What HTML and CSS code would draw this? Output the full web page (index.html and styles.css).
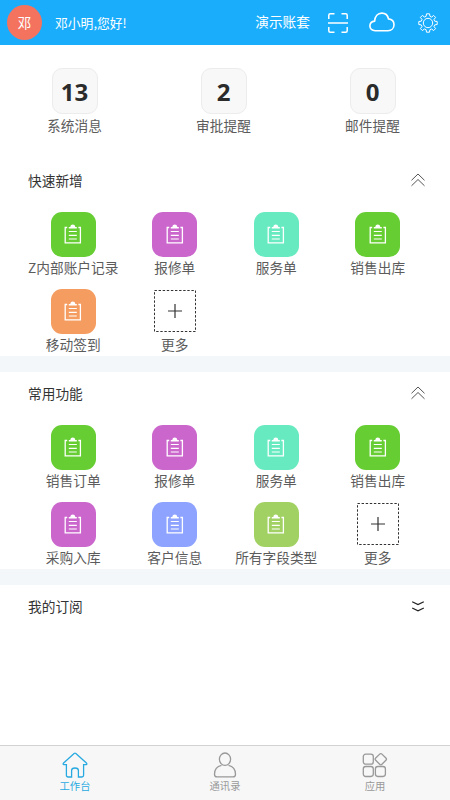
FILE: index.html
```html
<!DOCTYPE html>
<html lang="zh-CN">
<head>
<meta charset="utf-8">
<title>工作台</title>
<link rel="stylesheet" href="styles.css">
</head>
<body>
<svg class="defs" aria-hidden="true">
  <symbol id="clip" viewBox="0 0 18 20">
    <path d="M3.2 3.5H1.2V18.8H16.4V3.5H14.4" fill="none" stroke="currentColor" stroke-width="1.3"/>
    <path d="M4.8 4.5V3H6.3C6.6 1.4 7.5.6 8.8.6S11 1.4 11.3 3H12.8V4.5Z" fill="currentColor"/>
    <path d="M4.8 7.5H12.8M4.8 11.3H12.8M4.8 15H12.8" stroke="currentColor" stroke-width="1.2"/>
  </symbol>
  <symbol id="plus" viewBox="0 0 14 14">
    <path d="M7 0V14M0 7H14" stroke="currentColor" stroke-width="1.2"/>
  </symbol>
  <symbol id="up" viewBox="0 0 14 14">
    <path d="M.5 7.3L7 1L13.5 7.3M.5 12.8L7 6.5L13.5 12.8" fill="none" stroke="currentColor" stroke-width="1"/>
  </symbol>
  <symbol id="down" viewBox="0 0 14 14">
    <path d="M1.2 2.8L7 5.6L12.8 2.8M1.2 9L7 11.8L12.8 9" fill="none" stroke="currentColor" stroke-width="1.2"/>
  </symbol>
</svg>

<header class="topbar">
  <span class="avatar">邓</span>
  <span class="greeting">邓小明,您好!</span>
  <span class="account">演示账套</span>
  <svg class="scan" viewBox="0 0 20 20"><path d="M.8 6V2.3Q.8.8 2.3.8H6.5M13.5.8H17.7Q19.2.8 19.2 2.3V6M.8 14V17.7Q.8 19.2 2.3 19.2H6.5M13.5 19.2H17.7Q19.2 19.2 19.2 17.7V14M0 10H20"/></svg>
  <svg class="cloud" viewBox="0 0 26 20"><path d="M6.2 18.7C3 18.7.9 16.8.9 14.1C.9 11.3 2.8 9.4 5.6 9.1C6 4.4 8.8 1.1 12.7 1.1C16.2 1.1 18.8 3.2 19.5 6.9C22.8 7.3 25 9.6 25 12.7C25 16.2 22.4 18.7 19 18.7Z"/></svg>
  <svg class="gear" viewBox="0 0 20 20"><path d="M8.5.8H11.5L12 3.4L13.7 4.1L15.6 2.4L17.6 4.4L16 6.5L16.7 8.2L19.2 8.5V11.5L16.7 11.9L16 13.6L17.6 15.6L15.6 17.6L13.6 16L11.9 16.7L11.5 19.2H8.5L8.1 16.7L6.4 16L4.4 17.6L2.4 15.6L4 13.6L3.3 11.9L.8 11.5V8.5L3.3 8.2L4 6.5L2.4 4.4L4.4 2.4L6.4 4L8.1 3.4Z"/><circle cx="10" cy="10" r="4.7"/></svg>
</header>

<main>
  <section class="stats">
    <div class="stat"><b class="count">13</b><span class="label">系统消息</span></div>
    <div class="stat"><b class="count">2</b><span class="label">审批提醒</span></div>
    <div class="stat"><b class="count">0</b><span class="label">邮件提醒</span></div>
  </section>

  <section class="panel">
    <div class="panel-head"><h2>快速新增</h2><svg class="chevron"><use href="#up"/></svg></div>
    <div class="apps">
      <div class="app"><span class="tile green"><svg><use href="#clip"/></svg></span><span class="label">Z内部账户记录</span></div>
      <div class="app"><span class="tile purple"><svg><use href="#clip"/></svg></span><span class="label">报修单</span></div>
      <div class="app"><span class="tile mint"><svg><use href="#clip"/></svg></span><span class="label">服务单</span></div>
      <div class="app"><span class="tile green"><svg><use href="#clip"/></svg></span><span class="label">销售出库</span></div>
      <div class="app"><span class="tile orange"><svg><use href="#clip"/></svg></span><span class="label">移动签到</span></div>
      <div class="app"><span class="tile more"><svg class="frame" viewBox="0 0 42 42"><rect x=".5" y=".5" width="41" height="41"/></svg><svg class="plus"><use href="#plus"/></svg></span><span class="label">更多</span></div>
    </div>
  </section>

  <section class="panel">
    <div class="panel-head"><h2>常用功能</h2><svg class="chevron"><use href="#up"/></svg></div>
    <div class="apps">
      <div class="app"><span class="tile green"><svg><use href="#clip"/></svg></span><span class="label">销售订单</span></div>
      <div class="app"><span class="tile purple"><svg><use href="#clip"/></svg></span><span class="label">报修单</span></div>
      <div class="app"><span class="tile mint"><svg><use href="#clip"/></svg></span><span class="label">服务单</span></div>
      <div class="app"><span class="tile green"><svg><use href="#clip"/></svg></span><span class="label">销售出库</span></div>
      <div class="app"><span class="tile purple"><svg><use href="#clip"/></svg></span><span class="label">采购入库</span></div>
      <div class="app"><span class="tile blue"><svg><use href="#clip"/></svg></span><span class="label">客户信息</span></div>
      <div class="app"><span class="tile lime"><svg><use href="#clip"/></svg></span><span class="label">所有字段类型</span></div>
      <div class="app"><span class="tile more"><svg class="frame" viewBox="0 0 42 42"><rect x=".5" y=".5" width="41" height="41"/></svg><svg class="plus"><use href="#plus"/></svg></span><span class="label">更多</span></div>
    </div>
  </section>

  <section class="panel last">
    <div class="panel-head"><h2>我的订阅</h2><svg class="chevron dark"><use href="#down"/></svg></div>
  </section>
</main>

<nav class="tabs">
  <a class="tab active"><svg viewBox="0 0 26 26"><path d="M12.1 1.5Q13 .8 13.9 1.5L24.4 11Q25.5 12.3 24 12.7H21.6V23.2Q21.6 25 19.8 25H16.4V18.5Q16.4 16 13 16T9.6 18.5V25H6.2Q4.4 25 4.4 23.2V12.7H2Q.5 12.3 1.6 11Z"/></svg><span>工作台</span></a>
  <a class="tab"><svg viewBox="0 0 26 26"><ellipse cx="13" cy="7.2" rx="5.6" ry="6.2"/><path d="M9.5 13.3C5 14.3 2.5 18 2.5 22.2Q2.5 24.9 5 24.9H21Q23.5 24.9 23.5 22.2C23.5 18 21 14.3 16.5 13.3"/></svg><span>通讯录</span></a>
  <a class="tab"><svg viewBox="0 0 26 26"><rect x="1.3" y="2.2" width="10" height="10" rx="2.4"/><rect x="1.3" y="14.5" width="10" height="10" rx="2.4"/><rect x="13.4" y="14.5" width="10" height="10" rx="2.4"/><rect x="14.4" y="2.8" width="8.8" height="8.8" rx="1.6" transform="rotate(45 18.8 7.2)"/></svg><span>应用</span></a>
</nav>
</body>
</html>
```
FILE: styles.css
```css
* { box-sizing: border-box; }
body {
  margin: 0;
  height: 800px;
  display: flex;
  flex-direction: column;
  background: #fff;
  color: #5c5c5c;
  font-family: "Noto Sans CJK SC", "Noto Sans", sans-serif;
  overflow: hidden;
}
svg { display: block; flex: none; }
.defs { position: absolute; width: 0; height: 0; }

.topbar {
  height: 45px;
  flex: none;
  display: flex;
  align-items: center;
  padding: 0 12px 0 7px;
  background: #1aadfc;
  color: #fff;
}
.topbar svg { fill: none; stroke: #fff; }
.avatar {
  width: 35px;
  height: 35px;
  border-radius: 50%;
  background: #f4735f;
  font-size: 13.5px;
  line-height: 34px;
  text-align: center;
}
.greeting { margin-left: 13px; padding-bottom: 1px; font-size: 12.8px; }
.account { margin-left: auto; padding-bottom: 3px; font-size: 13.7px; }
.scan { width: 20px; height: 20px; margin-left: 18px; stroke-width: 1.5; }
.cloud { width: 26px; height: 20px; margin: 0 0 2px 21px; stroke-width: 1.6; }
.gear { width: 20px; height: 20px; margin-left: 23px; stroke-width: 1; }

main { flex: 1; min-height: 0; }
.label { font-size: 13.7px; line-height: 20px; white-space: nowrap; }

.stats {
  height: 113.5px;
  display: grid;
  grid-template-columns: repeat(3, 149px);
  padding-top: 23px;
}
.stat { display: flex; flex-direction: column; align-items: center; gap: 1px; }
.count {
  width: 46px;
  height: 46px;
  border: 1px solid #ececec;
  border-radius: 10px;
  background: #f8f8f8;
  color: #2b2b2b;
  font: bold 24px/45px "Open Sans", "Noto Sans", sans-serif;
  text-align: center;
}

.panel { height: 213px; border-bottom: 16px solid #f3f7f9; }
.panel.last { border: 0; }
.panel-head {
  height: 42px;
  display: flex;
  align-items: center;
  justify-content: space-between;
  padding: 0 25px 0 28px;
}
h2 { margin: 0; color: #333; font-size: 13.7px; font-weight: 400; line-height: 20px; }
.chevron { width: 14px; height: 14px; color: #555; }
.chevron.dark { color: #222; }

.apps {
  display: grid;
  grid-template-columns: repeat(4, 101.5px);
  row-gap: 12px;
  padding: 11px 0 0 22.5px;
}
.app { display: flex; flex-direction: column; align-items: center; }
.tile {
  width: 45px;
  height: 45px;
  border-radius: 11px;
  display: grid;
  place-items: center;
  color: #fff;
}
.tile svg { width: 18px; height: 20px; }
.green { background: #66cd33; }
.purple { background: #cb66cc; }
.mint { background: #68eac0; }
.orange { background: #f59c60; }
.blue { background: #8da3ff; }
.lime { background: #a1d162; }
.more { color: #333; }
.more svg { grid-area: 1 / 1; }
.more .frame {
  width: 42px;
  height: 42px;
  fill: none;
  stroke: #333;
  stroke-width: 1;
  stroke-dasharray: 2.4 1.7;
}
.more .plus { width: 14px; height: 14px; }

.tabs {
  height: 55px;
  flex: none;
  display: grid;
  grid-template-columns: repeat(3, 1fr);
  border-top: 1px solid #d2d2d2;
  background: #f7f7f7;
}
.tab {
  display: flex;
  flex-direction: column;
  align-items: center;
  padding-top: 6px;
  color: #999;
  font-size: 10.3px;
  line-height: 16px;
}
.tab svg { width: 26px; height: 26px; fill: none; stroke: currentColor; stroke-width: 1.3; }
.tab.active { color: #28aae1; }
```
